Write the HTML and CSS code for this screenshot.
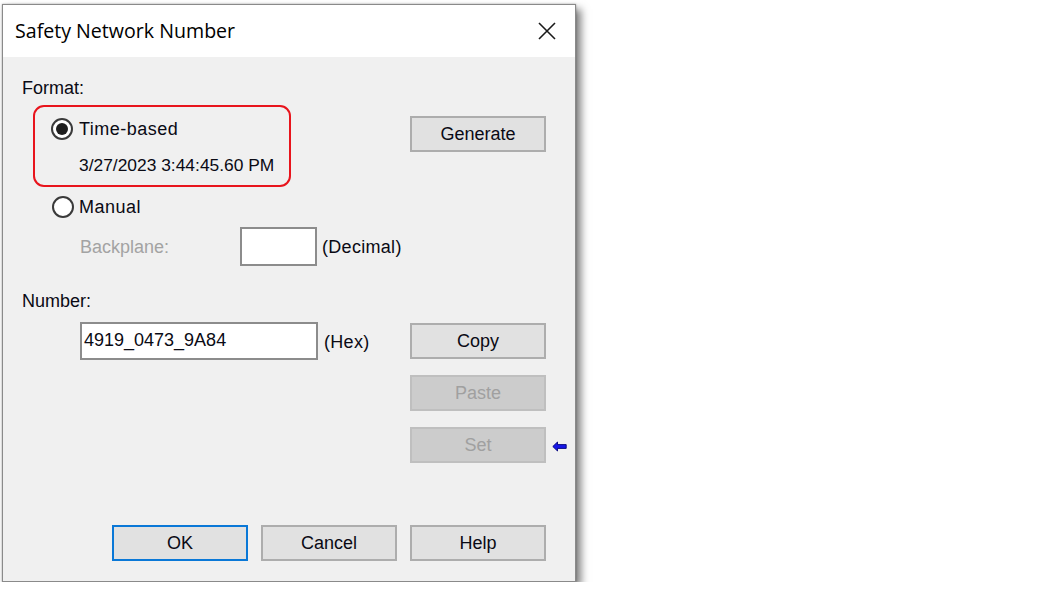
FILE: index.html
```html
<!DOCTYPE html>
<html lang="en">
<head>
  <meta charset="UTF-8">
  <title>Safety Network Number</title>
  <link rel="stylesheet" href="styles.css">
</head>
<body>
  <div class="dialog">
    <!-- Title Bar -->
    <div class="titlebar">
      <span class="title">Safety Network Number</span>
      <svg class="close" width="18" height="18" viewBox="0 0 18 18">
        <path d="M1 1 L17 17 M17 1 L1 17" stroke="#1a1a1a" stroke-width="1.6" fill="none"/>
      </svg>
    </div>

    <div class="content">
      <!-- Format -->
      <div class="label">Format:</div>
      <div class="format-row">
        <div class="format-left">
          <div class="highlight">
            <div class="radio-line">
              <span class="radio checked"><span class="dot"></span></span>
              <span class="wide-text">Time-based</span>
            </div>
            <div class="timestamp">3/27/2023 3:44:45.60 PM</div>
          </div>
          <div class="radio-line manual">
            <span class="radio"></span>
            <span class="wide-text">Manual</span>
          </div>
          <div class="backplane-row">
            <span class="muted backplane-label">Backplane:</span>
            <span class="textbox small"></span>
            <span class="unit">(Decimal)</span>
          </div>
        </div>
        <div class="side">
          <button class="btn generate">Generate</button>
        </div>
      </div>

      <!-- Number -->
      <div class="label number-label">Number:</div>
      <div class="number-row">
        <div class="number-left">
          <div class="textbox wide">4919_0473_9A84</div>
          <span class="unit">(Hex)</span>
        </div>
        <div class="button-stack">
          <button class="btn">Copy</button>
          <button class="btn disabled">Paste</button>
          <div class="set-row">
            <button class="btn disabled">Set</button>
            <svg class="arrow" width="15" height="11" viewBox="0 0 15 11">
              <path d="M0.8 5.5 L5.5 1 L5.5 3.6 L14.2 3.6 L14.2 7.4 L5.5 7.4 L5.5 10 Z" fill="#1616e8" stroke="#00007a" stroke-width="0.9"/>
            </svg>
          </div>
        </div>
      </div>

      <!-- Footer Buttons -->
      <div class="footer">
        <button class="btn default">OK</button>
        <button class="btn">Cancel</button>
        <button class="btn">Help</button>
      </div>
    </div>
  </div>
</body>
</html>
```

FILE: styles.css
```css
/* Reset */
* {
  margin: 0;
  padding: 0;
  box-sizing: border-box;
}

body {
  background-color: #ffffff;
  font-family: "Liberation Sans", Arial, sans-serif;
  font-size: 18px;
  line-height: 20px;
  color: #0a0a14;
  padding: 4px 0 0 2px;
}

/* Dialog Window */
.dialog {
  width: 574px;
  border: 1px solid #8a8a8a;
  background-color: #f0f0f0;
  box-shadow: 0 0 2px rgba(0, 0, 0, 0.3), 5px 5px 8px rgba(0, 0, 0, 0.5);
}

.titlebar {
  height: 52px;
  background-color: #ffffff;
  display: flex;
  align-items: center;
  justify-content: space-between;
  padding: 0 19px 0 12px;
}

.title {
  font-family: "Open Sans", "Noto Sans", sans-serif;
  font-size: 19.6px;
  color: #000;
  padding-bottom: 1px;
}

.close {
  margin-bottom: 1px;
}

/* Body */
.content {
  padding: 21px 0 20px 19px;
}

.label {
  height: 20px;
}

.format-row {
  display: flex;
  margin-top: 7px;
}

.format-left {
  width: 388px;
}

.highlight {
  width: 258px;
  height: 82px;
  margin-left: 11px;
  border: 2px solid #e8141c;
  border-radius: 11px;
  padding: 12px 0 0 16px;
}

.radio-line {
  display: flex;
  align-items: center;
  height: 20px;
  gap: 6px;
}

.wide-text {
  letter-spacing: 0.5px;
}

.manual {
  margin: 10px 0 0 30px;
  gap: 5px;
}

.radio {
  width: 22px;
  height: 22px;
  border: 2px solid #3a3a3a;
  border-radius: 50%;
  background-color: #ffffff;
  display: flex;
  align-items: center;
  justify-content: center;
}

.dot {
  width: 12px;
  height: 12px;
  border-radius: 50%;
  background-color: #1e1e1e;
}

.timestamp {
  margin: 16px 0 0 28px;
  height: 20px;
  font-size: 17.4px;
}

.backplane-row {
  display: flex;
  align-items: center;
  margin: 10px 0 0 58px;
  height: 39px;
}

.backplane-label {
  width: 160px;
}

.muted {
  color: #a3a3a3;
}

.textbox {
  background-color: #ffffff;
  border: 2px solid #8c8c8c;
}

.textbox.small {
  width: 77px;
  height: 39px;
}

.unit {
  margin-left: 5px;
  letter-spacing: 0.3px;
}

.side {
  padding-top: 11px;
}

/* Buttons */
.btn {
  width: 136px;
  height: 36px;
  font-family: "Liberation Sans", Arial, sans-serif;
  font-size: 18px;
  color: #0a0a14;
  background-color: #e1e1e1;
  border: 2px solid #adadad;
  display: flex;
  align-items: center;
  justify-content: center;
}

.btn.disabled {
  background-color: #cccccc;
  border-color: #bfbfbf;
  color: #a0a0a0;
}

.btn.default {
  border-color: #0a78d7;
}

/* Number */
.number-label {
  margin-top: 25px;
}

.number-row {
  display: flex;
  margin-top: 11px;
}

.number-left {
  width: 388px;
  display: flex;
  align-items: center;
  align-self: flex-start;
  padding-left: 58px;
}

.textbox.wide {
  width: 238px;
  height: 38px;
  padding: 6px 0 0 2px;
}

.number-left .unit {
  margin-left: 6px;
  padding-top: 2px;
}

.button-stack {
  display: flex;
  flex-direction: column;
  gap: 16px;
  margin-top: 1px;
}

.set-row {
  display: flex;
  align-items: center;
  gap: 6px;
}

.arrow {
  margin-top: 3px;
}

/* Footer */
.footer {
  display: flex;
  gap: 13px;
  margin-top: 62px;
  padding-left: 90px;
}
```
